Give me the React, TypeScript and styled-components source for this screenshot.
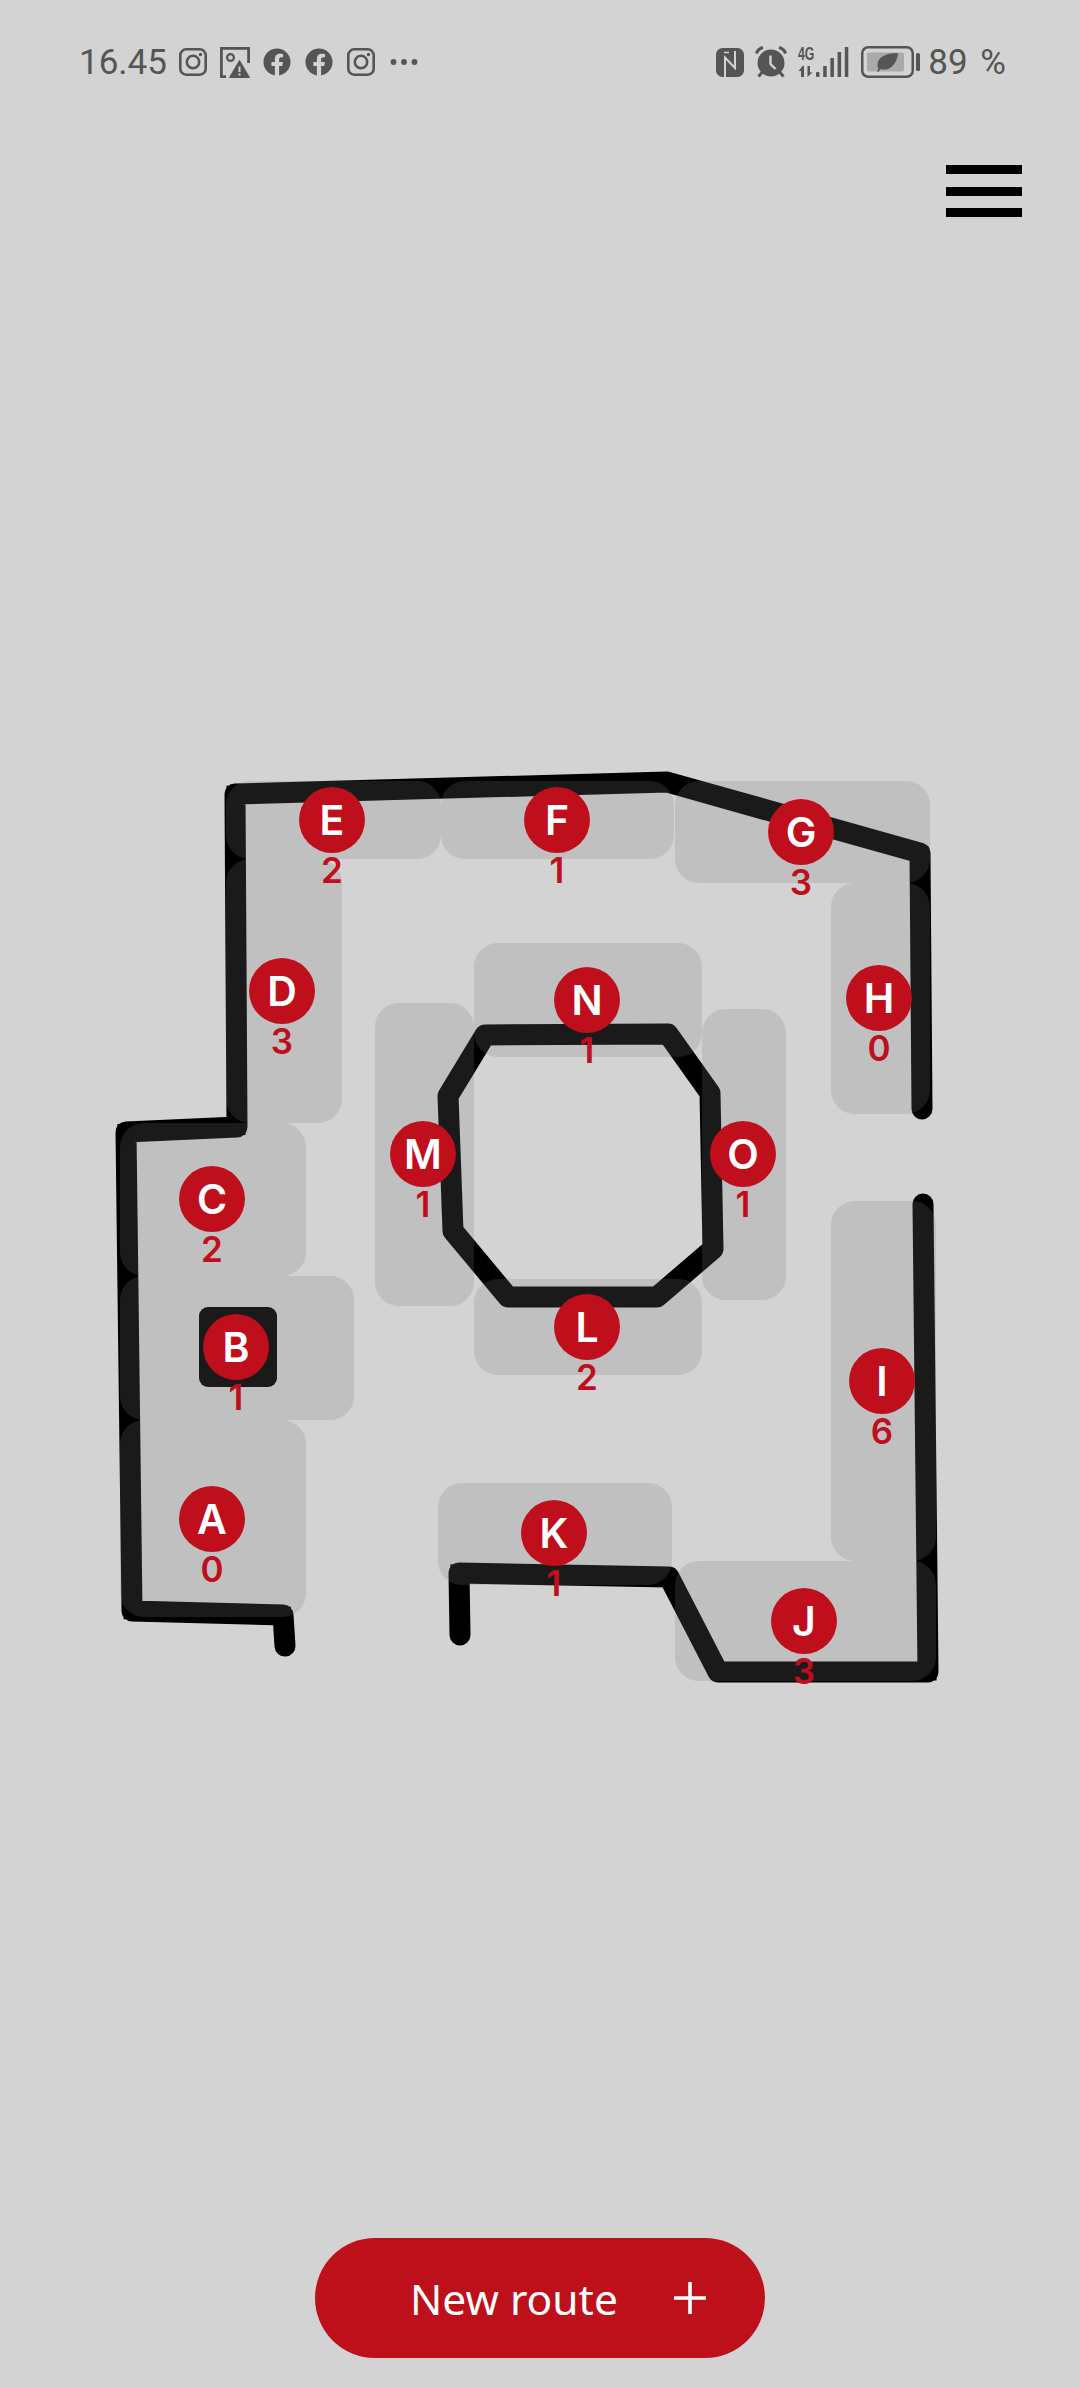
import React from 'react';
import styled, {createGlobalStyle} from 'styled-components';
import {FaFacebook} from 'react-icons/fa';

const STATUS_COLOR = '#555555';
const MAP_TOP = 760;
const MAP_HEIGHT = 940;

interface ZoneData {
    x: number;
    y: number;
    w: number;
    h: number;
}

interface StopData {
    letter: string;
    count: number;
    x: number;
    y: number;
}

const zones: ZoneData[] = [
    {x: 120, y: 1419, w: 186, h: 197},
    {x: 120, y: 1275, w: 234, h: 144},
    {x: 120, y: 1122, w: 186, h: 153},
    {x: 226, y: 858, w: 116, h: 264},
    {x: 226, y: 780, w: 215, h: 78},
    {x: 441, y: 780, w: 233, h: 78},
    {x: 675, y: 780, w: 255, h: 102},
    {x: 831, y: 882, w: 99, h: 231},
    {x: 831, y: 1200, w: 105, h: 360},
    {x: 675, y: 1560, w: 261, h: 120},
    {x: 438, y: 1482, w: 234, h: 102},
    {x: 474, y: 1278, w: 228, h: 96},
    {x: 375, y: 1002, w: 99, h: 303},
    {x: 474, y: 942, w: 228, h: 114},
    {x: 702, y: 1008, w: 84, h: 291},
];

const stops: StopData[] = [
    {letter: 'A', count: 0, x: 212, y: 1518},
    {letter: 'B', count: 1, x: 236, y: 1346},
    {letter: 'C', count: 2, x: 212, y: 1198},
    {letter: 'D', count: 3, x: 282, y: 990},
    {letter: 'E', count: 2, x: 332, y: 819},
    {letter: 'F', count: 1, x: 557, y: 819},
    {letter: 'G', count: 3, x: 801, y: 831},
    {letter: 'H', count: 0, x: 879, y: 997},
    {letter: 'I', count: 6, x: 882, y: 1380},
    {letter: 'J', count: 3, x: 804, y: 1620},
    {letter: 'K', count: 1, x: 554, y: 1532},
    {letter: 'L', count: 2, x: 587, y: 1326},
    {letter: 'M', count: 1, x: 423, y: 1153},
    {letter: 'N', count: 1, x: 587, y: 999},
    {letter: 'O', count: 1, x: 743, y: 1153},
];

const wallLines = [
    '285,1645 283,1614 132,1610 126,1131 237,1126 235,793 667,781 920,852 922,1108',
    '923,1203 928,1671 718,1671 669,1576 459,1572 460,1634',
    '485,1034 668,1033 710,1092 713,1248 657,1296 508,1296 453,1230 448,1095 485,1034',
];

const GlobalStyle = createGlobalStyle`
    html, body {
        margin: 0;
        padding: 0;
        background: #d3d3d3;
    }
`;

const Page = styled.div`
    display: flex;
    flex-direction: column;
    width: 1080px;
    height: 2388px;
    background: #d3d3d3;
    overflow: hidden;
`;

const StatusBar = styled.div`
    display: flex;
    align-items: center;
    justify-content: space-between;
    height: 40px;
    margin-top: 42px;
    padding: 0 74px 0 79px;
    color: ${STATUS_COLOR};
    font-family: Roboto, "Noto Sans", sans-serif;
    font-size: 35px;
    font-weight: 400;
`;

const StatusGroup = styled.div`
    display: flex;
    align-items: center;
`;

const Time = styled.span`
    width: 100px;
`;

const Percent = styled.span`
    margin-left: 8px;
    white-space: pre;
    word-spacing: 4px;
`;

const StatusIcon = styled.svg<{$gap?: number}>`
    display: block;
    flex: none;
    margin-right: ${(props) => props.$gap ?? 0}px;
`;

const FacebookIcon = styled(FaFacebook)`
    display: block;
    flex: none;
    width: 28px;
    height: 28px;
    margin-right: 14px;
`;

const Toolbar = styled.div`
    display: flex;
    justify-content: flex-end;
    margin-top: 83px;
    padding-right: 58px;
`;

const Hamburger = styled.div`
    display: flex;
    flex-direction: column;
    gap: 12.5px;
    width: 76px;
`;

const HamburgerBar = styled.span`
    display: block;
    height: 9px;
    background: #000;
`;

const MapCanvas = styled.div`
    position: relative;
    height: ${MAP_HEIGHT}px;
    margin-top: 544px;
`;

const WallLayer = styled.svg`
    position: absolute;
    inset: 0;
`;

const Zone = styled.div<{$x: number; $y: number; $w: number; $h: number}>`
    position: absolute;
    left: ${(props) => props.$x}px;
    top: ${(props) => props.$y - MAP_TOP}px;
    width: ${(props) => props.$w}px;
    height: ${(props) => props.$h}px;
    border-radius: 24px;
    background: rgba(124, 124, 124, 0.21);
`;

const Stop = styled.div<{$x: number; $y: number}>`
    position: absolute;
    left: ${(props) => props.$x - 50}px;
    top: ${(props) => props.$y - MAP_TOP - 33}px;
    display: flex;
    flex-direction: column;
    align-items: center;
    width: 100px;
    font-family: Inter, "Noto Sans", sans-serif;
`;

const StopBadge = styled.div`
    display: flex;
    align-items: center;
    justify-content: center;
    width: 66px;
    height: 66px;
    border-radius: 50%;
    background: #bf0f1c;
    color: #fff;
    font-size: 41px;
    font-weight: 600;
    line-height: 66px;
`;

const StopCount = styled.div`
    height: 34px;
    color: #bf0f1c;
    font-size: 35px;
    font-weight: 600;
    line-height: 34px;
`;

const Footer = styled.div`
    display: flex;
    justify-content: center;
    margin-top: auto;
    padding-bottom: 30px;
`;

const NewRouteButton = styled.button`
    display: flex;
    align-items: center;
    gap: 55px;
    box-sizing: border-box;
    width: 450px;
    height: 120px;
    padding: 0 0 0 95px;
    border: none;
    border-radius: 60px;
    background: #bd101b;
    color: #fff;
    font-family: "Noto Sans", sans-serif;
    font-size: 42.5px;
    font-weight: 400;
`;

const InstagramIcon = ({gap}: {gap: number}) => (
    <StatusIcon width={28} height={28} viewBox='0 0 28 28' $gap={gap}>
        <rect x={1.3} y={1.3} width={25.4} height={25.4} rx={6} fill='none' stroke={STATUS_COLOR} strokeWidth={2.6}/>
        <circle cx={14} cy={14} r={6.2} fill='none' stroke={STATUS_COLOR} strokeWidth={2.6}/>
        <circle cx={21.5} cy={6.5} r={1.7} fill={STATUS_COLOR}/>
    </StatusIcon>
);

const ImageWarningIcon = () => (
    <StatusIcon width={30} height={31} viewBox='0 0 30 31' $gap={13}>
        <path d='M6 29.6H1.4V1.4H28.6V16' fill='none' stroke={STATUS_COLOR} strokeWidth={2.8}/>
        <circle cx={10.5} cy={10.5} r={3.4} fill='none' stroke={STATUS_COLOR} strokeWidth={2.2}/>
        <path d='M19.5 13.5L29.5 30.5H9.5Z' fill={STATUS_COLOR} stroke={STATUS_COLOR} strokeWidth={1} strokeLinejoin='round'/>
        <path d='M19.5 19.5V25M19.5 26.5V28.5' stroke='#d3d3d3' strokeWidth={2}/>
    </StatusIcon>
);

const DotsIcon = () => (
    <StatusIcon width={28} height={8} viewBox='0 0 28 8'>
        <circle cx={3.5} cy={4} r={2.9} fill={STATUS_COLOR}/>
        <circle cx={14} cy={4} r={2.9} fill={STATUS_COLOR}/>
        <circle cx={24.5} cy={4} r={2.9} fill={STATUS_COLOR}/>
    </StatusIcon>
);

const NfcIcon = () => (
    <StatusIcon width={28} height={29} viewBox='0 0 28 29' $gap={11}>
        <rect x={0} y={0} width={28} height={29} rx={6.5} fill={STATUS_COLOR}/>
        <path d='M9 29V9.5L19 20V3' fill='none' stroke='#d3d3d3' strokeWidth={2}/>
        <path d='M8 4.5L13 4.5' fill='none' stroke='#d3d3d3' strokeWidth={1.5}/>
    </StatusIcon>
);

const AlarmIcon = () => (
    <StatusIcon width={32} height={32} viewBox='0 0 32 32' $gap={11}>
        <circle cx={16} cy={17} r={13.5} fill={STATUS_COLOR}/>
        <path d='M1.5 7.5C2.5 4 4.5 2.5 8 1.5M30.5 7.5C29.5 4 27.5 2.5 24 1.5' fill='none' stroke={STATUS_COLOR} strokeWidth={3}/>
        <path d='M7 26.5L3.5 30.5M25 26.5L28.5 30.5' stroke={STATUS_COLOR} strokeWidth={3}/>
        <path d='M15.5 9.5V18L20.5 23' fill='none' stroke='#d3d3d3' strokeWidth={2.4}/>
    </StatusIcon>
);

const SignalIcon = () => (
    <StatusIcon width={51} height={32} viewBox='0 0 51 32' $gap={12}>
        <text
            x={0}
            y={14}
            transform='scale(0.68 1)'
            fill={STATUS_COLOR}
            fontFamily='"Liberation Sans", sans-serif'
            fontSize={18}
            fontWeight={700}
        >
            {'4G'}
        </text>
        <path d='M4.5 20L0.5 25H3V31H6V20Z' fill={STATUS_COLOR}/>
        <path d='M9.5 20V31L14.5 26.5H12V20Z' fill={STATUS_COLOR}/>
        <rect x={18} y={26} width={3.5} height={5} rx={1} fill={STATUS_COLOR}/>
        <rect x={25.2} y={20} width={3.5} height={11} fill={STATUS_COLOR}/>
        <rect x={32.4} y={12} width={3.5} height={19} fill={STATUS_COLOR}/>
        <rect x={39.6} y={6} width={3.5} height={25} fill={STATUS_COLOR}/>
        <rect x={46.8} y={1} width={3.5} height={30} fill={STATUS_COLOR}/>
    </StatusIcon>
);

const BatteryIcon = () => (
    <StatusIcon width={59} height={32} viewBox='0 0 59 32'>
        <rect x={1.25} y={1.25} width={50.5} height={29.5} rx={6} fill='none' stroke={STATUS_COLOR} strokeWidth={2.5}/>
        <rect x={6} y={6.5} width={37} height={19} rx={2} fill='#aaaaaa'/>
        <rect x={55} y={7} width={4} height={18} rx={1.5} fill={STATUS_COLOR}/>
        <path d='M37 7C28 7 17 9.5 16.5 19C16.4 21 17 22 17.5 22.5C17 23.5 16.5 24.5 16 25.5L17.5 26C18 25 18.5 24 19.5 23C28 25.5 36 19 37 7Z' fill={STATUS_COLOR}/>
    </StatusIcon>
);

const Wall = ({points}: {points: string}) => (
    <g fill='none' stroke='#000'>
        <polyline points={points} strokeWidth={21} strokeLinejoin='round' strokeLinecap='round'/>
        <polyline points={points} strokeWidth={17} strokeLinejoin='miter'/>
    </g>
);

const App = () => {
    return (
        <Page>
            <GlobalStyle/>
            <StatusBar>
                <StatusGroup>
                    <Time>{'16.45'}</Time>
                    <InstagramIcon gap={13}/>
                    <ImageWarningIcon/>
                    <FacebookIcon/>
                    <FacebookIcon/>
                    <InstagramIcon gap={15}/>
                    <DotsIcon/>
                </StatusGroup>
                <StatusGroup>
                    <NfcIcon/>
                    <AlarmIcon/>
                    <SignalIcon/>
                    <BatteryIcon/>
                    <Percent>{'89 %'}</Percent>
                </StatusGroup>
            </StatusBar>
            <Toolbar>
                <Hamburger>
                    <HamburgerBar/>
                    <HamburgerBar/>
                    <HamburgerBar/>
                </Hamburger>
            </Toolbar>
            <MapCanvas>
                <WallLayer width={1080} height={MAP_HEIGHT} viewBox={`0 ${MAP_TOP} 1080 ${MAP_HEIGHT}`}>
                    {wallLines.map((points) => (
                        <Wall key={points} points={points}/>
                    ))}
                    <rect x={199} y={1306} width={78} height={80} rx={9} fill='#000'/>
                </WallLayer>
                {zones.map((zone) => (
                    <Zone
                        key={`${zone.x}-${zone.y}`}
                        $x={zone.x}
                        $y={zone.y}
                        $w={zone.w}
                        $h={zone.h}
                    />
                ))}
                {stops.map((stop) => (
                    <Stop key={stop.letter} $x={stop.x} $y={stop.y}>
                        <StopBadge>{stop.letter}</StopBadge>
                        <StopCount>{stop.count}</StopCount>
                    </Stop>
                ))}
            </MapCanvas>
            <Footer>
                <NewRouteButton>
                    {'New route'}
                    <svg width={34} height={34} viewBox='0 0 34 34'>
                        <path d='M17 1V33M1 17H33' stroke='#fff' strokeWidth={3.6} fill='none'/>
                    </svg>
                </NewRouteButton>
            </Footer>
        </Page>
    );
};

export default App;
